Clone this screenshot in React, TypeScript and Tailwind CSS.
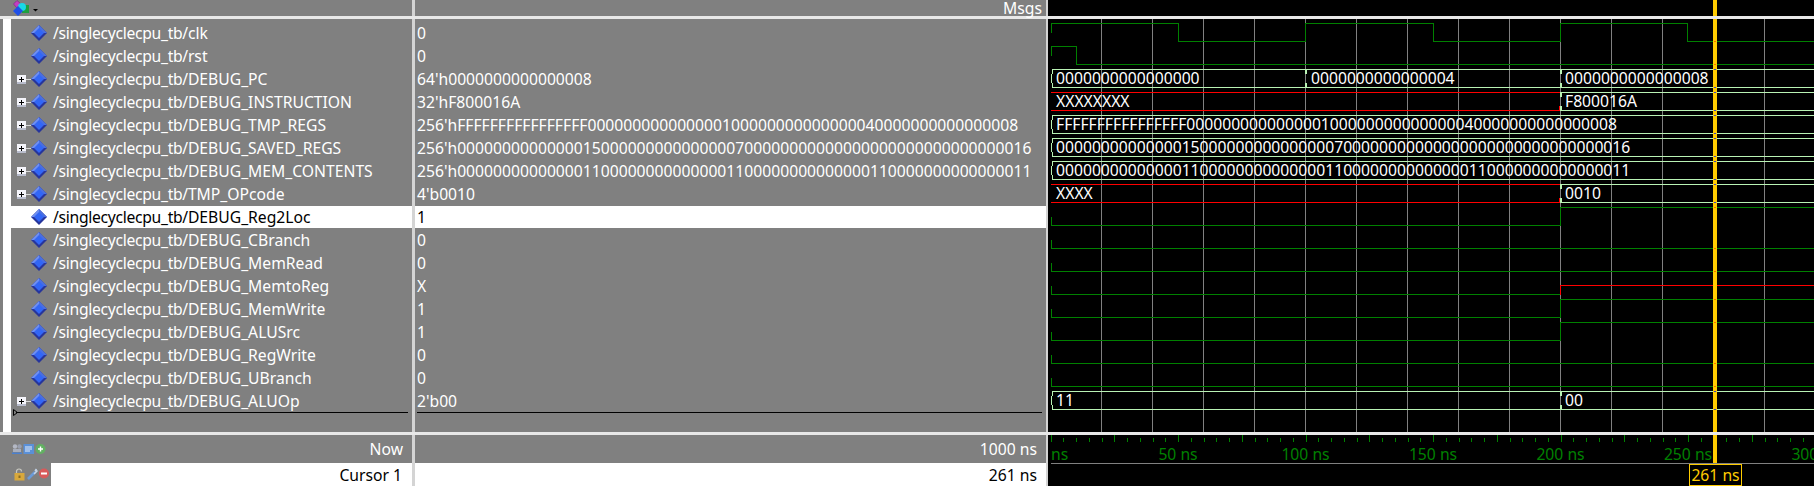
import * as React from "react";

interface SignalRow {
    name: string;
    value: string;
    bus?: boolean;
    selected?: boolean;
}

const signals: Array<SignalRow> = [
    { name: "clk", value: "0" },
    { name: "rst", value: "0" },
    { name: "DEBUG_PC", value: "64'h0000000000000008", bus: true },
    { name: "DEBUG_INSTRUCTION", value: "32'hF800016A", bus: true },
    { name: "DEBUG_TMP_REGS", value: "256'hFFFFFFFFFFFFFFFF000000000000000100000000000000040000000000000008", bus: true },
    { name: "DEBUG_SAVED_REGS", value: "256'h0000000000000015000000000000000700000000000000000000000000000016", bus: true },
    { name: "DEBUG_MEM_CONTENTS", value: "256'h0000000000000011000000000000001100000000000000110000000000000011", bus: true },
    { name: "TMP_OPcode", value: "4'b0010", bus: true },
    { name: "DEBUG_Reg2Loc", value: "1", selected: true },
    { name: "DEBUG_CBranch", value: "0" },
    { name: "DEBUG_MemRead", value: "0" },
    { name: "DEBUG_MemtoReg", value: "X" },
    { name: "DEBUG_MemWrite", value: "1" },
    { name: "DEBUG_ALUSrc", value: "1" },
    { name: "DEBUG_RegWrite", value: "0" },
    { name: "DEBUG_UBranch", value: "0" },
    { name: "DEBUG_ALUOp", value: "2'b00", bus: true }
];

const GREEN = "#008000";
const BUS = "#b9f2b4";
const RED = "#ff0000";
const CURSOR = "#ffcc00";
const FONT = "'Noto Sans', sans-serif";

const rowTop = (row: number) => 23 + row * 23;
const rowLow = (row: number) => 41 + row * 23;

const gridLines = Array.from({ length: 14 }, (_, i) => 1101 + i * 51);

// little colour specks where the cursor crosses a wave
const busCrossings = [2, 3, 4, 5, 6, 7, 16].flatMap((r) => [rowTop(r), rowLow(r)]);
const greenCrossings = [41, 64, 207, 248, 271, 299, 322, 363, 386];

const Diamond = () => (
    <svg width="16" height="16" viewBox="0 0 16 16" className="shrink-0">
        <path d="M8 0 16 8 8 16 0 8Z" fill="#26359c" />
        <path d="M8 0 0 8 8 8Z" fill="#6f8ff0" />
        <path d="M8 0 16 8 8 8Z" fill="#4a6fe0" />
        <path d="M8 3 13 8 8 13 3 8Z" fill="#3266f6" />
    </svg>
);

const Expander = () => (
    <svg width="14" height="9" viewBox="0 0 14 9" className="shrink-0">
        <rect x="0" y="0" width="9" height="9" fill="#f4f4fa" />
        <rect x="0" y="7" width="9" height="2" fill="#b8bccc" />
        <path d="M2 4.5H7M4.5 2V7" stroke="#000000" strokeWidth="1" />
        <path d="M9 4.5H14" stroke="#d8d8d8" strokeWidth="1" />
    </svg>
);

const HeaderIcon = () => (
    <svg width="26" height="16" viewBox="0 0 26 16" className="ml-[13px]">
        <path d="M4 0.5 8 4 4 8 0.5 4Z" fill="#c23fc0" stroke="#7a1f7a" strokeWidth="0.6" />
        <rect x="9" y="5" width="7" height="8" fill="#1f9f3f" />
        <circle cx="9" cy="7" r="4" fill="#19d8e8" />
        <path d="M5 6 10 11 5 16 0 11Z" fill="#1f50e8" />
        <path d="M20 9H25L22.5 11.5Z" fill="#000000" />
    </svg>
);

const NowIcons = () => (
    <svg width="36" height="12" viewBox="0 0 36 12" className="ml-[11px] shrink-0">
        <circle cx="4" cy="3.5" r="2.2" fill="#b4b8c4" />
        <circle cx="8.5" cy="3.5" r="2.2" fill="#9aa0b0" />
        <rect x="2" y="6" width="8" height="3" fill="#a8aebc" />
        <rect x="1" y="9.5" width="10" height="1.5" fill="#4a80d0" />
        <rect x="12.5" y="1" width="10.5" height="10" fill="#5a90d8" />
        <path d="M14 4H21M14 6H21M14 8H19" stroke="#e8eef8" strokeWidth="1" />
        <circle cx="29.5" cy="6" r="5" fill="#62b062" />
        <path d="M27 6H32M29.5 3.5V8.5" stroke="#ffffff" strokeWidth="1.4" />
    </svg>
);

const CursorIcons = () => (
    <svg width="36" height="13" viewBox="0 0 36 13" className="ml-[14px] shrink-0">
        <path d="M2.5 5V3.5a2.5 2.5 0 0 1 5 0" fill="none" stroke="#c8c8c0" strokeWidth="1.2" />
        <rect x="0.5" y="5" width="10" height="7.5" fill="#d8a83c" />
        <rect x="4.5" y="7.5" width="2" height="2.5" fill="#8a6a20" />
        <path d="M14 11 21 4" stroke="#6a9ad8" strokeWidth="2.6" />
        <path d="M20 6 23.5 2.5M21 3 22.5 1" stroke="#c4d4e8" strokeWidth="1.6" />
        <circle cx="30" cy="5.5" r="5" fill="#d85a5a" />
        <rect x="27" y="4.5" width="6" height="2" fill="#ffffff" />
    </svg>
);

const BusStart = ({ row }: { row: number }) => {
    const top = rowTop(row);
    const low = rowLow(row);
    return (
        <path
            d={`M1052.5 ${top}V${top + 5}M1051.5 ${top + 5}V${low - 4}M1052.5 ${low - 4}V${low + 1}`}
            fill="none"
            stroke={BUS}
        />
    );
};

const BusSegment = ({ row, from, to, color = BUS }: { row: number; from: number; to: number; color?: string }) => (
    <path d={`M${from} ${rowTop(row) + 0.5}H${to}M${from} ${rowLow(row) + 0.5}H${to}`} fill="none" stroke={color} />
);

const BusEdge = ({ row, x }: { row: number; x: number }) => (
    <g fill={BUS}>
        <rect x={x} y={rowTop(row)} width="2" height="5" />
        <rect x={x} y={rowLow(row) - 4} width="2" height="5" />
    </g>
);

// an unknown bus (red) ending in a known value
const XEnd = ({ row }: { row: number }) => (
    <>
        <BusSegment row={row} from={1051} to={1560} color={RED} />
        <BusSegment row={row} from={1561} to={1814} />
        <rect x="1559" y={rowLow(row) - 4} width="1" height="5" fill={RED} />
        <BusEdge row={row} x={1560} />
    </>
);

const WaveText = ({ x, row, children }: { x: number; row: number; children: string }) => (
    <text x={x} y={rowLow(row) - 3} fill="#ffffff" fontFamily={FONT} fontSize="15.7">
        {children}
    </text>
);

const Waves = () => (
    <svg className="block" width="766" height="413" viewBox="1048 19 766 413" shapeRendering="crispEdges">
        {gridLines.map((x) => (
            <path key={x} d={`M${x + 0.5} 19V432`} stroke="#808080" />
        ))}

        {/* clk and rst */}
        <path d="M1051.5 33V23.5H1178.5V41.5H1305.5V23.5H1433.5V41.5H1560.5V23.5H1687.5V41.5H1814" fill="none" stroke={GREEN} />
        <path d="M1051.5 56V46.5H1076.5V64.5H1814" fill="none" stroke={GREEN} />

        {/* buses */}
        <BusStart row={2} />
        <BusSegment row={2} from={1052} to={1814} />
        <BusEdge row={2} x={1305} />
        <BusEdge row={2} x={1560} />
        <WaveText x={1056} row={2}>0000000000000000</WaveText>
        <WaveText x={1311} row={2}>0000000000000004</WaveText>
        <WaveText x={1565} row={2}>0000000000000008</WaveText>

        <XEnd row={3} />
        <WaveText x={1056} row={3}>XXXXXXXX</WaveText>
        <WaveText x={1565} row={3}>F800016A</WaveText>

        <BusStart row={4} />
        <BusSegment row={4} from={1052} to={1814} />
        <WaveText x={1056} row={4}>FFFFFFFFFFFFFFFF000000000000000100000000000000040000000000000008</WaveText>

        <BusStart row={5} />
        <BusSegment row={5} from={1052} to={1814} />
        <WaveText x={1056} row={5}>0000000000000015000000000000000700000000000000000000000000000016</WaveText>

        <BusStart row={6} />
        <BusSegment row={6} from={1052} to={1814} />
        <WaveText x={1056} row={6}>0000000000000011000000000000001100000000000000110000000000000011</WaveText>

        <XEnd row={7} />
        <WaveText x={1056} row={7}>XXXX</WaveText>
        <WaveText x={1565} row={7}>0010</WaveText>

        {/* single bit signals */}
        <path d="M1051.5 217V225.5H1560.5V207.5H1814" fill="none" stroke={GREEN} />
        <path d="M1051.5 240V248.5H1814" fill="none" stroke={GREEN} />
        <path d="M1051.5 263V271.5H1814" fill="none" stroke={GREEN} />
        <path d="M1051.5 286V294.5H1560.5" fill="none" stroke={GREEN} />
        <path d="M1560.5 295V285.5H1814" fill="none" stroke={RED} />
        <path d="M1051.5 309V317.5H1560.5V299.5H1814" fill="none" stroke={GREEN} />
        <path d="M1051.5 332V340.5H1560.5V322.5H1814" fill="none" stroke={GREEN} />
        <path d="M1051.5 355V363.5H1814" fill="none" stroke={GREEN} />
        <path d="M1051.5 378V386.5H1814" fill="none" stroke={GREEN} />

        <BusStart row={16} />
        <BusSegment row={16} from={1052} to={1814} />
        <BusEdge row={16} x={1560} />
        <WaveText x={1056} row={16}>11</WaveText>
        <WaveText x={1565} row={16}>00</WaveText>

        <rect x="1713" y="19" width="4" height="413" fill={CURSOR} />
        {busCrossings.map((y) => (
            <rect key={y} x="1714" y={y} width="2" height="1" fill="#3c3cc8" />
        ))}
        {greenCrossings.map((y) => (
            <rect key={y} x="1714" y={y} width="2" height="1" fill="#ff6a00" />
        ))}
    </svg>
);

const axisLabels = [50, 100, 150, 200, 250, 300];
const ticks = Array.from({ length: 61 }, (_, i) => i);
const timeToX = (ns: number) => 1050.5 + ns * 2.55;

const TimeAxis = () => (
    <svg className="block" width="766" height="52" viewBox="1048 434 766 52" shapeRendering="crispEdges">
        {ticks.map((i) => {
            const x = Math.round(timeToX(i * 5)) + 0.5;
            const major = i % 5 === 0;
            return <path key={i} d={`M${x} ${major ? 434 : 437}V441`} stroke={GREEN} />;
        })}
        <text x="1051" y="459" fill={GREEN} fontFamily={FONT} fontSize="15.7">
            ns
        </text>
        {axisLabels.map((ns) => (
            <text key={ns} x={timeToX(ns)} y={459} textAnchor="middle" fill={GREEN} fontFamily={FONT} fontSize="15.7">
                {ns} ns
            </text>
        ))}
        <rect x="1051" y="462" width="763" height="1" fill="#808080" />
        <rect x="1048" y="485" width="766" height="1" fill="#808080" />
        <rect x="1713" y="434" width="4" height="28" fill={CURSOR} />
        <rect x="1689.5" y="463.5" width="52" height="21" fill="#000000" stroke={CURSOR} />
        <text x="1715.5" y="480" textAnchor="middle" fill={CURSOR} fontFamily={FONT} fontSize="15.7">
            261 ns
        </text>
    </svg>
);

export default function App() {
    return (
        <div
            className="flex flex-col w-[1814px] h-[486px] overflow-hidden bg-black text-[15.7px] leading-[18px] text-white"
            style={{ fontFamily: FONT }}
        >
            {/* header */}
            <div className="relative flex h-[16px] shrink-0">
                <div className="w-[412px] bg-[#808080] flex items-center overflow-hidden">
                    <HeaderIcon />
                </div>
                <div className="w-[3px] bg-[#d4d4d4]" />
                <div className="w-[631px] bg-[#808080] flex items-center justify-end pr-[4px] leading-[16px]">Msgs</div>
                <div className="w-[2px] bg-[#d4d4d4]" />
                <div className="flex-1 bg-black pl-[665px]">
                    <div className="w-[4px] h-full bg-[#ffcc00]" />
                </div>
            </div>
            <div className="h-[3px] shrink-0 bg-[#e8e8e8]" />

            {/* signal list and waves */}
            <div className="flex h-[413px] shrink-0">
                <div className="w-[412px] flex">
                    <div className="w-[3px] bg-[#808080]" />
                    <div className="flex-1 bg-white">
                        <div className="ml-[8px] h-full bg-[#808080] pt-[3px]">
                            {signals.map((s) => (
                                <div key={s.name} className="h-[23px]">
                                    <div
                                        className={
                                            s.selected
                                                ? "h-[22px] -ml-[8px] pl-[28px] flex items-center bg-white text-black"
                                                : "h-[22px] pl-[20px] flex items-center"
                                        }
                                    >
                                        {s.bus ? (
                                            <span className="-ml-[14px] flex items-center">
                                                <Expander />
                                            </span>
                                        ) : null}
                                        <Diamond />
                                        <span className="ml-[6px] whitespace-nowrap">
                                            <span className="tracking-[-0.3px]">/singlecyclecpu_tb/</span>
                                            {s.name}
                                        </span>
                                    </div>
                                </div>
                            ))}
                            <div className="relative ml-[5px] mr-[4px] -mt-px h-px bg-black">
                                <svg width="5" height="7" viewBox="0 0 5 7" className="absolute -left-[3px] -top-[3px]">
                                    <path d="M0.5 0.5V6.5L4.5 3.5Z" fill="none" stroke="#000000" />
                                </svg>
                            </div>
                        </div>
                    </div>
                </div>
                <div className="w-[3px] bg-[#d4d4d4]" />
                <div className="w-[631px] bg-[#808080] pt-[3px]">
                    {signals.map((s) => (
                        <div key={s.name} className="h-[23px]">
                            <div
                                className={
                                    s.selected
                                        ? "h-[22px] pl-[2px] flex items-center bg-white text-black"
                                        : "h-[22px] pl-[2px] flex items-center"
                                }
                            >
                                <span className="whitespace-nowrap">{s.value}</span>
                            </div>
                        </div>
                    ))}
                    <div className="ml-[2px] mr-[4px] -mt-px h-px bg-black" />
                </div>
                <div className="w-[2px] bg-[#d4d4d4]" />
                <Waves />
            </div>
            <div className="h-[3px] shrink-0 bg-[#e8e8e8]" />

            {/* now and cursor */}
            <div className="flex flex-1">
                <div className="w-[412px] flex flex-col border-b border-[#c0c0c0]">
                    <div className="h-[28px] bg-[#808080] flex items-center justify-between pr-[9px]">
                        <NowIcons />
                        <span>Now</span>
                    </div>
                    <div className="flex-1 flex items-center bg-[#808080]">
                        <div className="w-[51px] flex items-center">
                            <CursorIcons />
                        </div>
                        <div className="flex-1 h-full bg-white text-black flex items-center justify-end pr-[10px]">Cursor 1</div>
                    </div>
                </div>
                <div className="w-[3px] bg-[#d4d4d4]" />
                <div className="w-[631px] flex flex-col border-b border-[#c0c0c0]">
                    <div className="h-[28px] bg-[#808080] flex items-center justify-end pr-[9px]">1000 ns</div>
                    <div className="flex-1 bg-white text-black flex items-center justify-end pr-[9px]">261 ns</div>
                </div>
                <div className="w-[2px] bg-[#d4d4d4]" />
                <TimeAxis />
            </div>
        </div>
    );
}
